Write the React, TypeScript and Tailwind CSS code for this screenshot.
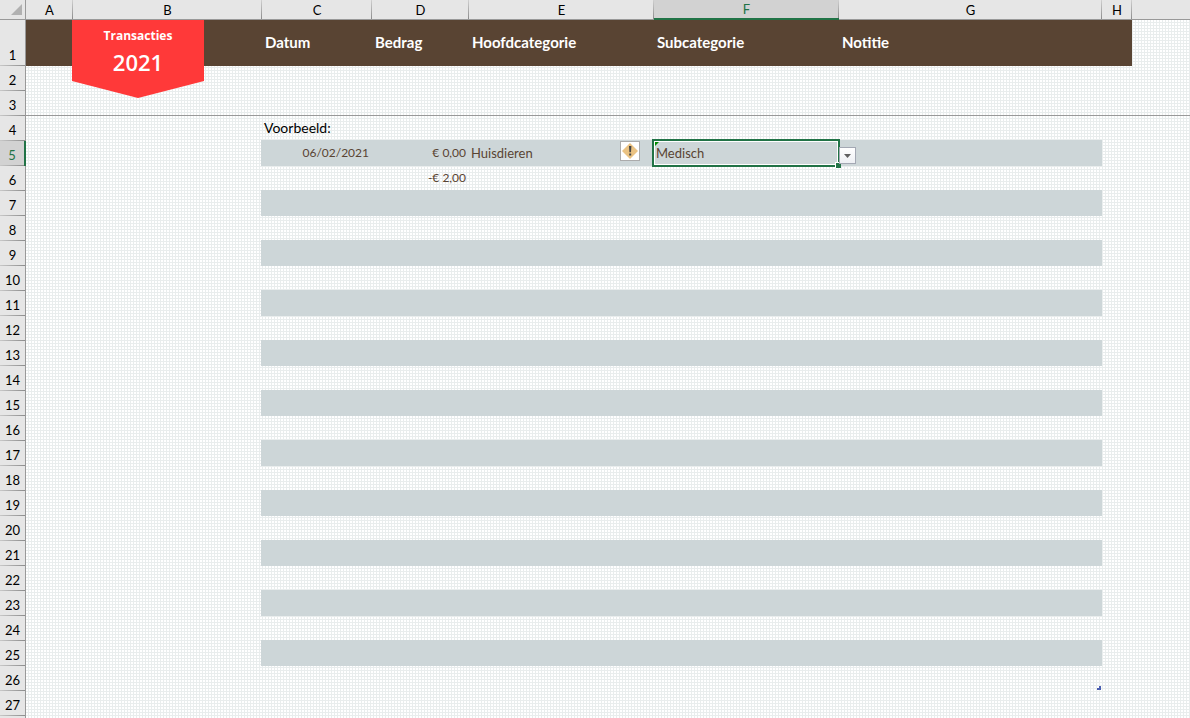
import React, { useState } from 'react';

interface Transaction {
  date?: string;
  amount?: string;
  category?: string;
}

const COLUMNS = [
  { id: 'A', width: 'w-[47px]' },
  { id: 'B', width: 'w-[189px]' },
  { id: 'C', width: 'w-[110px]' },
  { id: 'D', width: 'w-[97px]' },
  { id: 'E', width: 'w-[185px]' },
  { id: 'F', width: 'w-[185px]' },
  { id: 'G', width: 'w-[263px]' },
  { id: 'H', width: 'w-[30px]' },
];

const TITLES = ['Datum', 'Bedrag', 'Hoofdcategorie', 'Subcategorie', 'Notitie'];

const TRANSACTIONS: Record<number, Transaction> = {
  5: { date: '06/02/2021', amount: '€ 0,00', category: 'Huisdieren' },
  6: { amount: '-€ 2,00' },
};

const ROWS = Array.from({ length: 23 }, (_, i) => i + 5);

// Light grid texture of the sheet background
const SHEET =
  'bg-white bg-[linear-gradient(to_right,transparent_2px,#e9eded_2px),linear-gradient(to_bottom,transparent_2px,#e9eded_2px)] bg-[size:3px_3px] bg-[position:26px_20px]';

const RowHeader: React.FC<{ row: number; active?: boolean }> = ({ row, active }) => (
  <th
    scope="row"
    className={`p-0 pb-px align-bottom font-normal leading-5 bg-[linear-gradient(to_right,#c8c8c8,#8c8c8c)] bg-[size:100%_1px] bg-bottom bg-no-repeat ${
      active ? 'border-r-2 border-[#217346] bg-[#d2d2d2] text-[#217346]' : 'border-r border-[#999999] bg-[#e6e6e6] text-black'
    }`}
  >
    {row}
  </th>
);

const Banner = () => (
  <div className="absolute -left-px top-0 z-10 h-[78px] w-[132px] bg-[#ff3939] pt-2 text-center text-white [clip-path:polygon(0_0,100%_0,100%_61px,50%_100%,0_61px)]">
    <p className="font-['Open_Sans',sans-serif] text-xs leading-4 font-bold">Transacties</p>
    <p className="font-['Open_Sans',sans-serif] text-[22px] leading-9 font-semibold">2021</p>
  </div>
);

const SubcategoryCell = () => {
  const [value, setValue] = useState('Medisch');

  return (
    <>
      <div className="pointer-events-none absolute -top-0.5 -right-px -bottom-px -left-0.5 border-2 border-[#217346]">
        <div className="h-full border border-white">
          <svg className="size-1" viewBox="0 0 4 4" aria-hidden="true"><path d="M0 0h4L0 4z" fill="#008a00" /></svg>
        </div>
        <span className="absolute -right-[3px] -bottom-[3px] size-1.5 border-t border-l border-white bg-[#217346]" />
      </div>
      <select
        aria-label="Subcategorie"
        value={value}
        onChange={(e) => setValue(e.target.value)}
        className="absolute top-0 left-0 h-6 w-[202px] appearance-none pl-0.5 outline-none"
      >
        <option>Medisch</option>
        <option>Voeding</option>
      </select>
      <span className="pointer-events-none absolute top-[6px] -right-[17px] flex size-[17px] items-center justify-center border border-[#a3a8b3] bg-linear-to-b from-white to-[#eef0f4]">
        <svg className="h-1 w-[7px]" viewBox="0 0 7 4" aria-hidden="true"><path d="M0 0h7L3.5 4z" fill="#606060" /></svg>
      </span>
    </>
  );
};

export default function App() {
  return (
    <main className={`h-screen overflow-hidden font-[Lato,sans-serif] text-[13px] leading-5 ${SHEET}`}>
      <table className="w-full table-fixed border-separate border-spacing-0">
        <colgroup>
          <col className="w-[26px]" />
          {COLUMNS.map((c) => (
            <col key={c.id} className={c.width} />
          ))}
          <col />
        </colgroup>

        <thead>
          <tr className="h-5">
            <td className="border-r border-b border-[#999999] bg-[#e6e6e6] p-0">
              <svg className="ml-[11px] size-[11px]" viewBox="0 0 11 11" aria-hidden="true"><path d="M11 0v11H0z" fill="#b1b1b1" /></svg>
            </td>
            {COLUMNS.map((c) => (
              <th
                key={c.id}
                scope="col"
                className={`p-0 font-normal leading-[18px] bg-[linear-gradient(to_bottom,#d0d0d0,#8c8c8c)] bg-[size:1px_100%] bg-right bg-no-repeat ${
                  c.id === 'F' ? 'border-b-2 border-[#217346] bg-[#d2d2d2] text-[#217346]' : 'border-b border-[#999999] bg-[#e6e6e6] text-black'
                }`}
              >
                {c.id}
              </th>
            ))}
            <td className="border-b border-[#999999] bg-[#e6e6e6] p-0" />
          </tr>
        </thead>

        <tbody>
          <tr className="h-[46px]">
            <RowHeader row={1} />
            <td className="bg-[#594433] p-0" />
            <td className="relative bg-[#594433] p-0">
              <Banner />
            </td>
            {TITLES.map((title) => (
              <td key={title} className="bg-[#594433] p-0 pb-0.5 pl-[3px] text-[15px] font-bold text-white">{title}</td>
            ))}
            <td className="bg-[#594433] p-0" />
            <td className="p-0" />
          </tr>
          <tr className="h-[25px]">
            <RowHeader row={2} />
            <td colSpan={9} className="p-0" />
          </tr>
          <tr className="h-[25px]">
            <RowHeader row={3} />
            <td colSpan={9} className="border-b border-[#999999] p-0" />
          </tr>
          <tr className="h-[25px]">
            <RowHeader row={4} />
            <td colSpan={2} className="p-0" />
            <td className="p-0 pb-0.5 pl-0.5 text-sm leading-5 text-black">Voorbeeld:</td>
            <td colSpan={6} className="p-0" />
          </tr>

          {ROWS.map((row) => {
            const item = TRANSACTIONS[row];
            // Odd rows are banded up to row 25
            const band = row % 2 === 1 && row <= 25 ? 'bg-[#cdd6d8] shadow-[0_-1px_#cdd6d8,-1px_0_#cdd6d8,-1px_-1px_#cdd6d8]' : '';
            return (
              <tr key={row} className="h-[25px] text-[#594433]">
                <RowHeader row={row} active={row === 5} />
                <td className="p-0" />
                <td className="p-0" />
                <td className={`p-0 pr-[3px] pb-0.5 text-right text-xs leading-5 ${band}`}>{item?.date}</td>
                <td className={`p-0 pr-[3px] pb-0.5 text-right text-xs leading-5 ${band}`}>{item?.amount}</td>
                <td className={`relative p-0 pb-0.5 pl-0.5 ${band}`}>
                  {item?.category}
                  {row === 5 && (
                    <button aria-label="Foutcontrole" className="absolute top-0 right-[14px] flex size-5 items-center justify-center border border-[#ababab] bg-white">
                      <svg className="size-4" viewBox="0 0 16 16" aria-hidden="true">
                        <path d="M8 0l8 8-8 8-8-8z" fill="#eac282" />
                        <path d="M7 3h2.4L9 9.2H7.4zM7.2 10.5h2v2h-2z" fill="#444444" />
                      </svg>
                    </button>
                  )}
                </td>
                <td className={`relative p-0 ${row === 5 ? 'z-10' : ''} ${band}`}>{row === 5 && <SubcategoryCell />}</td>
                <td className={`relative p-0 ${band}`}>
                  {row === 26 && (
                    <svg className="absolute right-px bottom-px size-1" viewBox="0 0 4 4" aria-hidden="true"><path d="M2 0h2v4H0V2h2z" fill="#4a5eb0" /></svg>
                  )}
                </td>
                <td className="p-0" />
                <td className="p-0" />
              </tr>
            );
          })}
          <tr className="h-[25px]">
            <td className="border-r border-[#999999] bg-[#e6e6e6] p-0" />
            <td colSpan={9} className="p-0" />
          </tr>
        </tbody>
      </table>
    </main>
  );
}
